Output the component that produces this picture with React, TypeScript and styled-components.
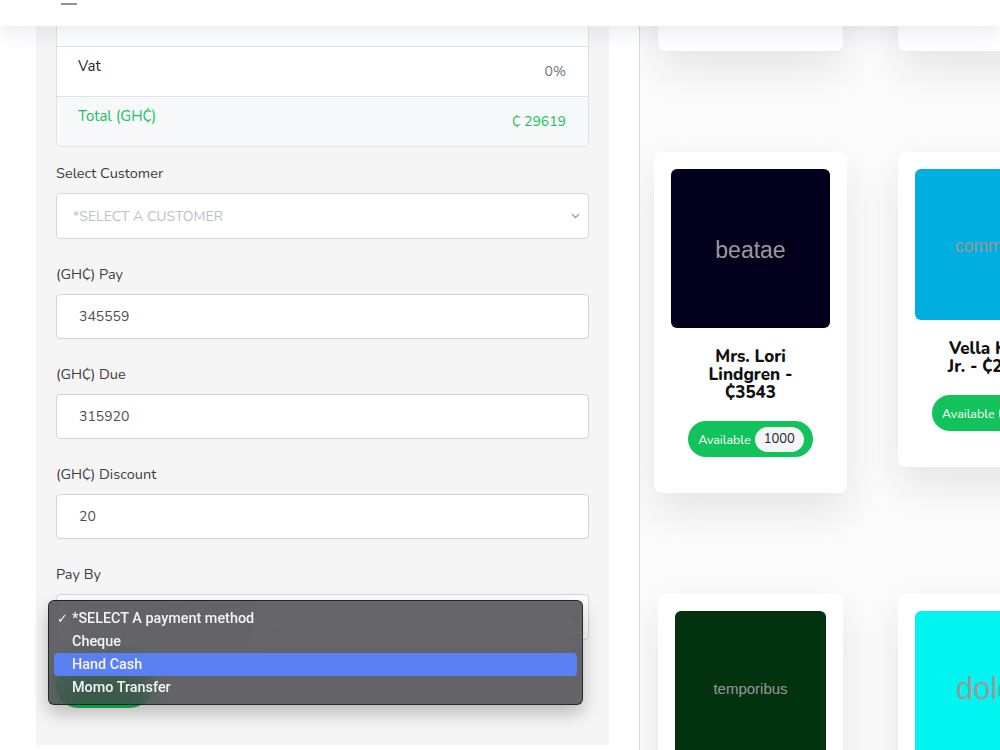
import React from "react";
import styled, { createGlobalStyle } from "styled-components";

const GlobalStyle = createGlobalStyle`
  html, body { margin: 0; padding: 0; background: #ffffff; }
  body {
    font-family: Nunito, Lato, "Noto Sans", sans-serif;
    color: #212529;
    overflow: hidden;
  }
  * { box-sizing: border-box; }
`;

/* ---------- shell ---------- */

const Page = styled.div`
  position: relative;
  width: 1000px;
  height: 750px;
  overflow: hidden;
  background: #ffffff;
`;

const TopBar = styled.header`
  position: absolute;
  top: 0;
  left: 0;
  right: 0;
  height: 26px;
  z-index: 5;
  display: flex;
  align-items: flex-start;
  padding-left: 61px;
  overflow: hidden;
  background: #ffffff;
  box-shadow: 0 5px 22px rgba(60, 64, 120, 0.12);
`;

const MenuToggle = styled.button`
  margin-top: -11px;
  padding: 0;
  border: 0;
  background: none;
  width: 16px;
  height: 16px;
  display: block;
`;

const Main = styled.main`
  display: grid;
  grid-template-columns: 640px 360px;
  height: 750px;
`;

/* ---------- left: checkout form ---------- */

const LeftCol = styled.section`
  padding-left: 36px;
  border-right: 1px solid #d3dbe4;
  overflow: hidden;
  background: #ffffff;
`;

const Panel = styled.div`
  width: 573px;
  margin-top: -40px;
  padding: 25px 20px 37px;
  background: #f5f5f5;
`;

const Summary = styled.div`
  border: 1px solid #dee2e6;
  border-radius: 4px;
  overflow: hidden;
  background: #ffffff;
  margin-bottom: 15px;
`;

const SummaryRow = styled.div<{ $tall?: boolean; $shaded?: boolean; $accent?: boolean }>`
  display: flex;
  justify-content: space-between;
  height: ${(p) => (p.$tall ? 60 : 50)}px;
  padding: 0 22px 0 21px;
  background: ${(p) => (p.$shaded ? "#f7f8fa" : "#ffffff")};
  color: ${(p) => (p.$accent ? "#17c25b" : "#212529")};
  & + & { border-top: 1px solid #dee2e6; }
`;

const SummaryLabel = styled.span`
  align-self: flex-start;
  padding-top: 8px;
  font-size: 15px;
  line-height: 22px;
`;

const SummaryValue = styled.span<{ $accent?: boolean }>`
  align-self: center;
  font-size: 14px;
  line-height: 22px;
  color: ${(p) => (p.$accent ? "#17c25b" : "#6c757d")};
`;

const FormGroup = styled.div`
  margin-bottom: 24px;
`;

const Label = styled.label`
  display: block;
  margin-bottom: 9px;
  font-size: 14.5px;
  line-height: 22px;
  color: #3b3b3b;
`;

const FieldWrap = styled.div`
  position: relative;
`;

const SelectBox = styled.div<{ $muted?: boolean }>`
  height: 46px;
  display: flex;
  align-items: center;
  justify-content: space-between;
  padding: 0 8px 0 16px;
  border: 1px solid #d3d8de;
  border-radius: 4px;
  background: #ffffff;
  font-size: 14px;
  color: ${(p) => (p.$muted ? "#bdc1c6" : "#495057")};
`;

const TextInput = styled.input`
  display: block;
  width: 100%;
  height: 45px;
  padding: 0 22px;
  border: 1px solid #ced4da;
  border-radius: 4px;
  background: #ffffff;
  font-family: inherit;
  font-size: 14px;
  color: #495057;
  outline: none;
`;

const SubmitButton = styled.button`
  display: block;
  width: 96px;
  height: 44px;
  border: 0;
  border-radius: 22px;
  background: #12c25a;
  color: #ffffff;
  font-family: inherit;
  font-size: 15px;
`;

/* native-looking select popup */
const OptionMenu = styled.ul`
  position: absolute;
  left: -8px;
  top: 6px;
  width: 535px;
  margin: 0;
  padding: 6px 5px 5px;
  list-style: none;
  border: 1px solid rgba(20, 20, 22, 0.75);
  border-radius: 6px;
  background: rgba(64, 64, 69, 0.8);
  backdrop-filter: blur(14px);
  box-shadow: 0 8px 18px rgba(0, 0, 0, 0.25);
  z-index: 4;
`;

const OptionItem = styled.li<{ $active?: boolean }>`
  position: relative;
  height: 23px;
  padding-left: 18px;
  display: flex;
  align-items: center;
  border-radius: 4px;
  background: ${(p) => (p.$active ? "#5a7ff0" : "transparent")};
  font-family: Roboto, "Liberation Sans", sans-serif;
  font-weight: 500;
  font-size: 14.4px;
  color: #f4f4f6;
`;

const Check = styled.span`
  position: absolute;
  left: 3px;
  font-size: 13px;
`;

/* ---------- right: product cards ---------- */

const RightCol = styled.section`
  overflow: hidden;
  background: #fbfbfb;
`;

const CardGrid = styled.div`
  display: grid;
  grid-template-columns: repeat(2, 201px);
  column-gap: 39px;
  row-gap: 101px;
  align-items: start;
  justify-items: center;
  margin-top: -264px;
  padding-left: 10px;
`;

const Card = styled.article<{ $wide?: boolean }>`
  width: ${(p) => (p.$wide ? 193 : 185)}px;
  padding: 17px 17px 36px;
  border-radius: 8px;
  background: #ffffff;
  text-align: center;
  box-shadow: 0 18px 40px rgba(0, 0, 0, 0.09);
`;

const Thumb = styled.div<{ $bg: string; $size: number }>`
  width: 100%;
  aspect-ratio: 1;
  border-radius: 6px;
  display: flex;
  align-items: center;
  justify-content: center;
  padding-top: 4px;
  background: ${(p) => p.$bg};
  color: #999999;
  font-family: "Liberation Sans", Arial, sans-serif;
  font-size: ${(p) => p.$size}px;
`;

const CardTitle = styled.h3`
  max-width: 100px;
  margin: 20px auto 0;
  font-size: 17px;
  line-height: 18px;
  font-weight: 800;
  color: #111111;
`;

const StockPill = styled.div`
  display: inline-flex;
  align-items: center;
  height: 36px;
  margin-top: 19px;
  padding: 0 9px 0 10px;
  border-radius: 18px;
  background: #12c25a;
  color: #ffffff;
  font-size: 12.5px;
`;

const StockCount = styled.span`
  margin-left: 4px;
  height: 25px;
  padding: 0 9px;
  display: inline-flex;
  align-items: center;
  border-radius: 13px;
  background: #f4f5f7;
  color: #222222;
  font-size: 13px;
`;

const Chevron = () => (
  <svg width="9" height="6" viewBox="0 0 9 6" fill="none">
    <path d="M1 1l3.5 3.5L8 1" stroke="#9aa0a6" strokeWidth="1.3" />
  </svg>
);

type Product = {
  word: string;
  bg: string;
  size: number;
  title: string;
  count: string;
  wide?: boolean;
};

const products: Product[] = [
  { word: "quia", bg: "#6a2c91", size: 20, title: "Dr. Ava Kub - ₵1240", count: "800" },
  { word: "magnam", bg: "#c44b12", size: 20, title: "Emil Hane - ₵980", count: "300" },
  { word: "beatae", bg: "#03001e", size: 23, title: "Mrs. Lori Lindgren - ₵3543", count: "1000", wide: true },
  { word: "commodi", bg: "#00aee0", size: 17.5, title: "Vella Kihn Jr. - ₵2710", count: "500" },
  { word: "temporibus", bg: "#02330f", size: 15, title: "Prof. Jan Ward - ₵1875", count: "700" },
  { word: "dolor", bg: "#00f4f0", size: 31, title: "Cory Moen - ₵642", count: "250" },
];

const options = ["*SELECT A payment method", "Cheque", "Hand Cash", "Momo Transfer"];

export default function App() {
  return (
    <Page>
      <GlobalStyle />
      <TopBar>
        <MenuToggle aria-label="menu">
          <svg width="16" height="16" viewBox="0 0 16 16">
            <g stroke="#77787e" strokeWidth="1.6">
              <line x1="0" y1="2" x2="16" y2="2" />
              <line x1="0" y1="8.5" x2="16" y2="8.5" />
              <line x1="0" y1="15" x2="16" y2="15" />
            </g>
          </svg>
        </MenuToggle>
      </TopBar>

      <Main>
        <LeftCol>
          <Panel>
            <Summary>
              <SummaryRow $tall>
                <SummaryLabel>Sub Total</SummaryLabel>
                <SummaryValue>₵ 29619</SummaryValue>
              </SummaryRow>
              <SummaryRow>
                <SummaryLabel>Vat</SummaryLabel>
                <SummaryValue>0%</SummaryValue>
              </SummaryRow>
              <SummaryRow $shaded $accent>
                <SummaryLabel>Total (GH₵)</SummaryLabel>
                <SummaryValue $accent>₵ 29619</SummaryValue>
              </SummaryRow>
            </Summary>

            <FormGroup>
              <Label>Select Customer</Label>
              <SelectBox $muted>
                <span>*SELECT A CUSTOMER</span>
                <Chevron />
              </SelectBox>
            </FormGroup>

            <FormGroup>
              <Label>(GH₵) Pay</Label>
              <TextInput defaultValue="345559" />
            </FormGroup>

            <FormGroup>
              <Label>(GH₵) Due</Label>
              <TextInput defaultValue="315920" />
            </FormGroup>

            <FormGroup>
              <Label>(GH₵) Discount</Label>
              <TextInput defaultValue="20" />
            </FormGroup>

            <FormGroup>
              <Label>Pay By</Label>
              <FieldWrap>
                <SelectBox>
                  <span>*SELECT A payment method</span>
                  <Chevron />
                </SelectBox>
                <OptionMenu>
                  {options.map((o, i) => (
                    <OptionItem key={o} $active={i === 2}>
                      {i === 0 && <Check>✓</Check>}
                      {o}
                    </OptionItem>
                  ))}
                </OptionMenu>
              </FieldWrap>
            </FormGroup>

            <SubmitButton>Submit</SubmitButton>
          </Panel>
        </LeftCol>

        <RightCol>
          <CardGrid>
            {products.map((p) => (
              <Card key={p.word} $wide={p.wide}>
                <Thumb $bg={p.bg} $size={p.size}>
                  {p.word}
                </Thumb>
                <CardTitle>{p.title}</CardTitle>
                <StockPill>
                  Available
                  <StockCount>{p.count}</StockCount>
                </StockPill>
              </Card>
            ))}
          </CardGrid>
        </RightCol>
      </Main>
    </Page>
  );
}
